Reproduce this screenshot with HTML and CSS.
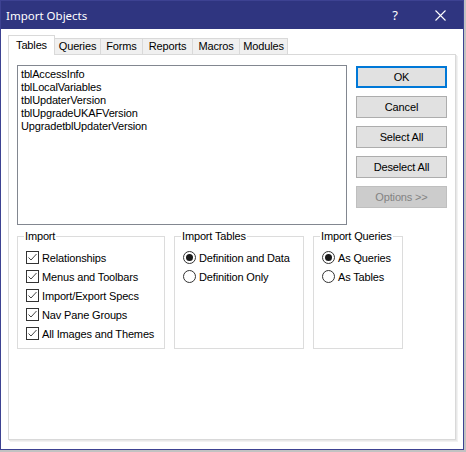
FILE: index.html
```html
<!DOCTYPE html>
<html>
<head>
<meta charset="utf-8">
<link rel="stylesheet" href="styles.css">
</head>
<body>
<div class="window">
  <div class="titlebar">
    <span class="title">Import Objects</span>
    <span class="help">?</span>
    <svg class="close" width="11" height="11" viewBox="0 0 11 11"><path d="M0.5 0.5 L10.5 10.5 M10.5 0.5 L0.5 10.5" stroke="#fff" stroke-width="1.1" fill="none"/></svg>
  </div>
  <div class="client">
    <div class="tabs">
      <div class="tab tab-active">Tables</div>
      <div class="tab t-queries">Queries</div>
      <div class="tab t-forms">Forms</div>
      <div class="tab t-reports">Reports</div>
      <div class="tab t-macros">Macros</div>
      <div class="tab t-modules">Modules</div>
    </div>
    <div class="panel">
      <div class="top">
        <div class="list">
          <div class="item">tblAccessInfo</div>
          <div class="item">tblLocalVariables</div>
          <div class="item">tblUpdaterVersion</div>
          <div class="item">tblUpgradeUKAFVersion</div>
          <div class="item">UpgradetblUpdaterVersion</div>
        </div>
        <div class="buttons">
          <div class="btn btn-default">OK</div>
          <div class="btn">Cancel</div>
          <div class="btn">Select All</div>
          <div class="btn">Deselect All</div>
          <div class="btn btn-disabled">Options &gt;&gt;</div>
        </div>
      </div>
      <div class="groups">
        <fieldset class="group g-import">
          <legend>Import</legend>
          <div class="row"><span class="check"><svg width="11" height="11" viewBox="0 0 11 11"><path d="M1.5 5.5 L4 8 L9.5 2" stroke="#444" stroke-width="1" fill="none"/></svg></span>Relationships</div>
          <div class="row"><span class="check"><svg width="11" height="11" viewBox="0 0 11 11"><path d="M1.5 5.5 L4 8 L9.5 2" stroke="#444" stroke-width="1" fill="none"/></svg></span>Menus and Toolbars</div>
          <div class="row"><span class="check"><svg width="11" height="11" viewBox="0 0 11 11"><path d="M1.5 5.5 L4 8 L9.5 2" stroke="#444" stroke-width="1" fill="none"/></svg></span>Import/Export Specs</div>
          <div class="row"><span class="check"><svg width="11" height="11" viewBox="0 0 11 11"><path d="M1.5 5.5 L4 8 L9.5 2" stroke="#444" stroke-width="1" fill="none"/></svg></span>Nav Pane Groups</div>
          <div class="row"><span class="check"><svg width="11" height="11" viewBox="0 0 11 11"><path d="M1.5 5.5 L4 8 L9.5 2" stroke="#444" stroke-width="1" fill="none"/></svg></span>All Images and Themes</div>
        </fieldset>
        <fieldset class="group g-tables">
          <legend>Import Tables</legend>
          <div class="row"><span class="radio radio-on"></span>Definition and Data</div>
          <div class="row"><span class="radio"></span>Definition Only</div>
        </fieldset>
        <fieldset class="group g-queries">
          <legend>Import Queries</legend>
          <div class="row"><span class="radio radio-on"></span>As Queries</div>
          <div class="row"><span class="radio"></span>As Tables</div>
        </fieldset>
      </div>
    </div>
  </div>
</div>
</body>
</html>
```
FILE: styles.css
```css
* { box-sizing: border-box; }
html, body { margin: 0; padding: 0; }
body {
  width: 466px;
  height: 452px;
  background: #c2c2c2;
  font-family: "Liberation Sans", Arial, sans-serif;
  font-size: 11px;
  letter-spacing: -0.15px;
  color: #000;
}
.window {
  width: 464px;
  height: 450px;
  border: 1px solid #3d4292;
  background: #fff;
  display: flex;
  flex-direction: column;
}
.titlebar {
  height: 28px;
  background: #2f3580;
  color: #fff;
  display: flex;
  align-items: center;
  padding-left: 5px;
  flex: none;
  letter-spacing: 0;
}
.title {
  font-family: "Noto Sans", "Open Sans", sans-serif;
  font-size: 11.5px;
  flex: 1;
}
.help {
  font-family: "Noto Sans", sans-serif;
  font-size: 13px;
  margin-right: 37px;
}
.close { margin-right: 17px; }
.client {
  flex: 1;
  padding: 6px 7px 0 7px;
}
.tabs {
  display: flex;
  align-items: flex-end;
  height: 19px;
  position: relative;
  z-index: 1;
}
.tab {
  height: 16px;
  line-height: 15px;
  padding: 0;
  text-align: center;
  background: #f0f0f0;
  border: 1px solid #d9d9d9;
  border-bottom: none;
  margin-left: -1px;
}
.tab-active {
  height: 20px;
  line-height: 18px;
  margin-bottom: -1px;
  margin-left: 0;
  background: #fff;
  width: 47px;
}
.t-queries { width: 47px; }
.t-forms { width: 43px; }
.t-reports { width: 51px; }
.t-macros { width: 48px; }
.t-modules { width: 49px; }
.panel {
  width: 448px;
  height: 386px;
  border: 1px solid #d9d9d9;
  box-shadow: 1px 1px 0 #e8e8e8, 2px 2px 0 #f2f2f2;
  padding: 10px 8px 0 8px;
}
.top {
  display: flex;
  gap: 9px;
}
.list {
  width: 331px;
  height: 160px;
  border: 1px solid #828790;
  padding: 2px 3px;
}
.item { height: 13px; line-height: 13px; }
.buttons {
  display: flex;
  flex-direction: column;
  gap: 8px;
  padding-top: 1px;
}
.btn {
  width: 91px;
  height: 22px;
  background: #e1e1e1;
  border: 1px solid #adadad;
  display: flex;
  align-items: center;
  justify-content: center;
}
.btn-default { border: 2px solid #0078d7; }
.btn-disabled {
  background: #cccccc;
  border-color: #bfbfbf;
  color: #838383;
}
.groups {
  display: flex;
  gap: 9px;
  margin-top: 5px;
}
.group {
  margin: 0;
  min-width: 0;
  height: 119px;
  border: 1px solid #dcdcdc;
  padding: 6px 0 0 8px;
}
.group legend {
  padding: 0 1px;
  margin-left: -2px;
}
.g-import { width: 148px; }
.g-tables { width: 130px; }
.g-queries { width: 90px; }
.row {
  height: 19px;
  display: flex;
  align-items: center;
}
.check {
  width: 13px;
  height: 13px;
  border: 1px solid #333;
  margin-right: 3px;
  display: flex;
  align-items: center;
  justify-content: center;
  flex: none;
}
.radio {
  width: 13px;
  height: 13px;
  border: 1px solid #333;
  border-radius: 50%;
  margin-right: 3px;
  flex: none;
  display: flex;
  align-items: center;
  justify-content: center;
}
.radio-on::after {
  content: "";
  width: 7px;
  height: 7px;
  border-radius: 50%;
  background: #1a1a1a;
}
```
